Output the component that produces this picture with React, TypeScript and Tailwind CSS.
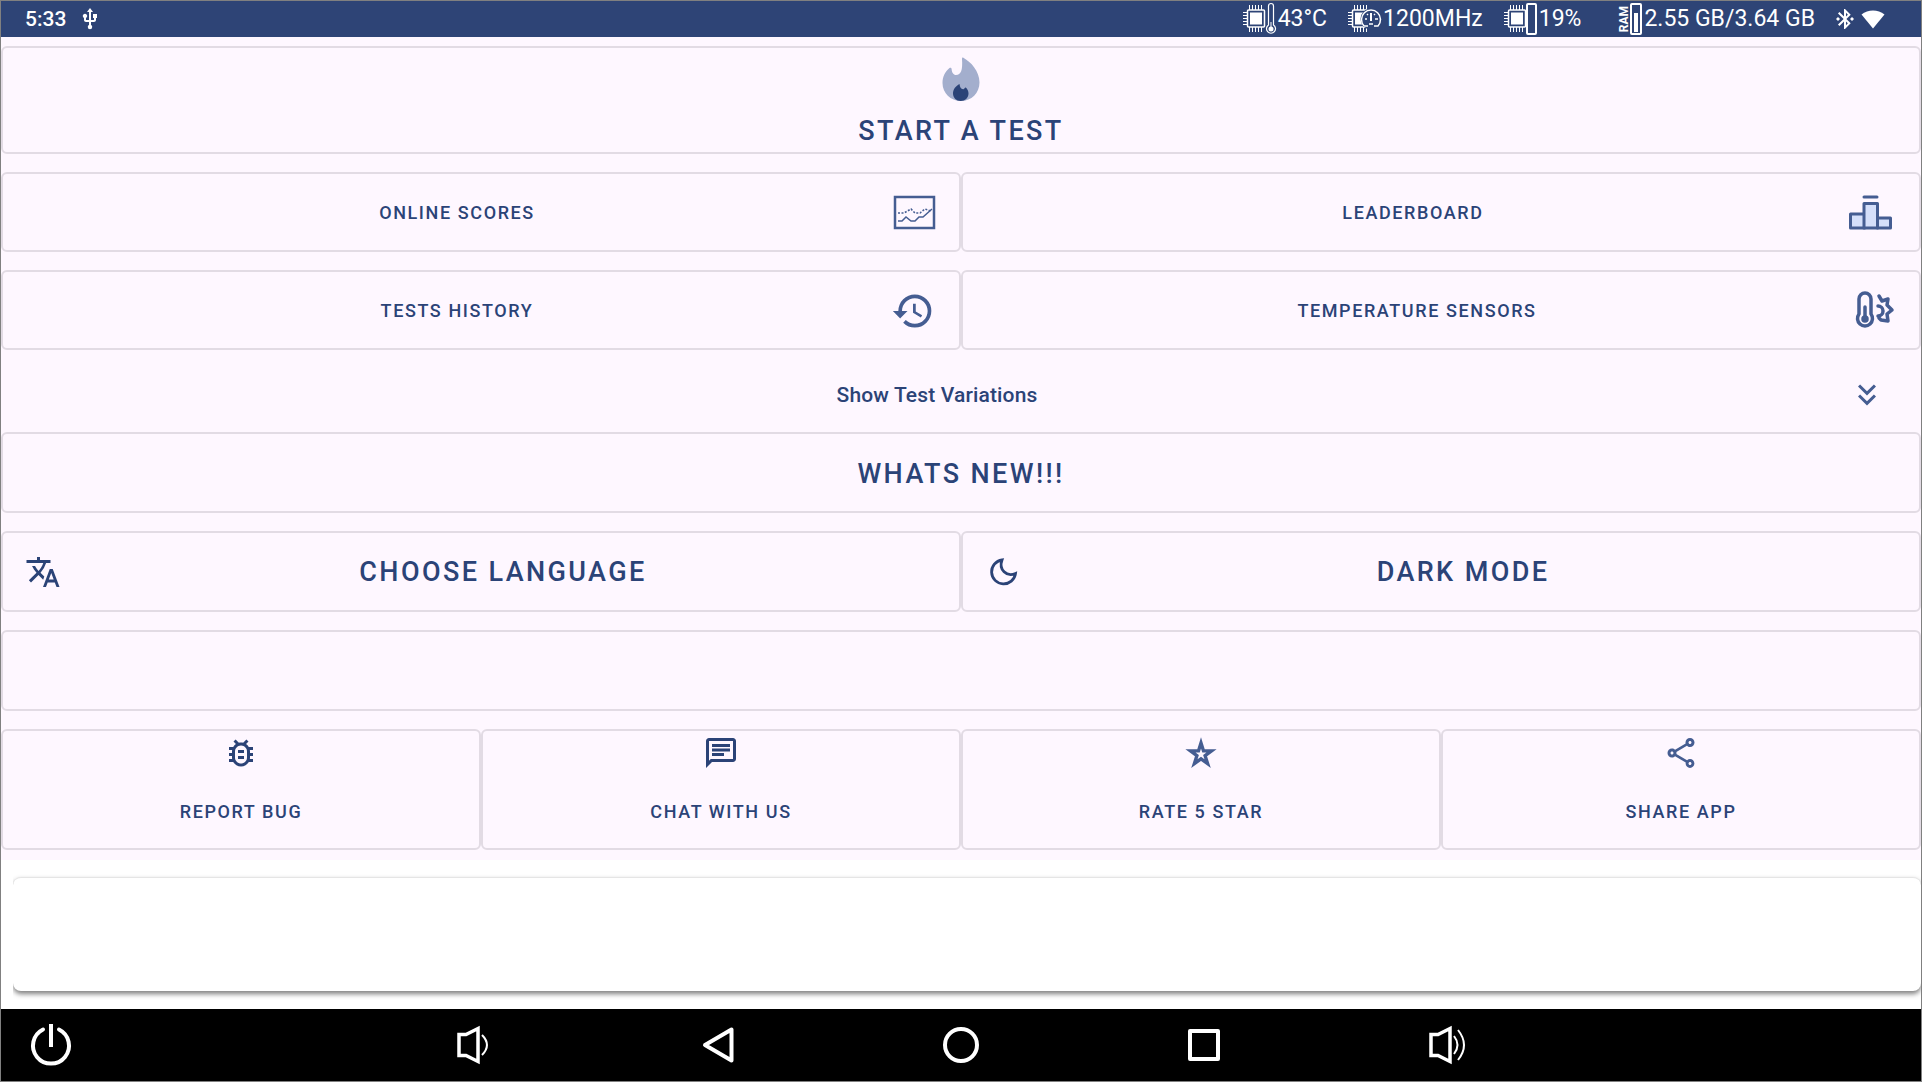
import React from "react";
import {
  MdBluetoothConnected,
  MdHistory,
  MdKeyboardDoubleArrowDown,
  MdOutlineBugReport,
  MdOutlineChat,
  MdOutlineShare,
  MdTranslate,
  MdUsb,
} from "react-icons/md";

const FlameIcon = () => (
  <svg width="38" height="44" viewBox="0 0 38 44" aria-hidden="true">
    <path
      d="M21 0.5C29 5 37.5 14 37.5 25.5C37.5 36 29.500 44 19 44C8.500 44 0.500 36 0.500 26C0.500 20 3 14.500 7.500 11C8.500 10.300 9.500 11 9.600 12C9.800 15.500 11.500 18 14 18C19 18 20.800 13 20 2C20 0.800 20.300 0.200 21 0.500Z"
      fill="#a3aecd"
    />
    <path
      d="M17.500 27C14 29 11 32 11 36.500C11 41 14.500 44 18.700 44C23 44 26.500 41 26.500 36.500C26.500 34 25.500 32 23.800 30.500C23 30 22.600 31.800 21.500 32.200C19 32.500 18 30.500 17.500 27Z"
      fill="#2b4377"
    />
  </svg>
);

const ScoresIcon = () => (
  <svg width="48" height="48" viewBox="0 0 48 48" fill="none" stroke="#455d92" aria-hidden="true">
    <rect x="6" y="8" width="39" height="31" strokeWidth="2.500" />
    <path d="M9 32h4l4-4 5 4h4l4-4h4l9-8" strokeWidth="1.500" />
    <path d="M9 24h6l7-4 4 4h5l5-4 6 2" strokeWidth="1.500" strokeDasharray="2 1.500" />
  </svg>
);

const PodiumIcon = () => (
  <svg
    width="56"
    height="48"
    viewBox="0 0 56 48"
    fill="#d5dffa"
    stroke="#455d92"
    strokeWidth="3"
    strokeLinejoin="round"
    strokeLinecap="round"
    aria-hidden="true"
  >
    <path d="M23 8h13" />
    <path d="M9.500 25h14v14h-14z" />
    <path d="M36.500 29h13v10h-13z" />
    <path d="M23 14.500h13.500v24.500H23z" />
  </svg>
);

const ThermometerIcon = () => (
  <svg
    width="48"
    height="48"
    viewBox="0 0 48 48"
    fill="none"
    stroke="#455d92"
    strokeWidth="3.500"
    strokeLinejoin="round"
    strokeLinecap="round"
    aria-hidden="true"
  >
    <path d="M10 12a6 6 0 0 1 12 0v15a7.500 7.500 0 1 1-12 0z" />
    <path d="M16 20v12" />
    <circle cx="16" cy="32" r="2" fill="#455d92" />
    <path d="M29 19a5 5 0 0 1 0 10" />
    <path d="M30 9l3 5 6-2-1 6 5 5-5 4 1 7-7-1-2-2" />
  </svg>
);

const MoonIcon = () => (
  <svg width="36" height="36" viewBox="0 0 36 36" aria-hidden="true">
    <path
      d="M17 6a12 12 0 1 0 13.500 13.500c-9 4-17-4-13.500-13.500z"
      fill="none"
      stroke="#2b4377"
      strokeWidth="2.800"
    />
  </svg>
);

const StarIcon = () => (
  <svg width="36" height="36" viewBox="0 0 36 36" aria-hidden="true">
    <path
      d="M18 8l2.500 7.900h8l-6.400 4.800 2.500 7.900-6.600-4.800-6.600 4.800 2.500-7.900-6.400-4.800h8z"
      fill="none"
      stroke="#455d92"
      strokeWidth="3.400"
    />
  </svg>
);

const Chip = () => (
  <g fill="none" stroke="#fff">
    <rect x="4.500" y="8" width="17" height="17" rx="1" strokeWidth="1.500" />
    <rect x="7" y="10.500" width="12" height="12" fill="#fff" stroke="none" />
    <path d="M6.500 3v5M9.500 3v5M12.500 3v5M15.500 3v5M18.500 3v5M6.500 25v5M9.500 25v5M12.500 25v5M15.500 25v5M18.500 25v5" />
    <path d="M0 10.500h4M0 13.500h4M0 16.500h4M0 19.500h4M0 22.500h4" />
  </g>
);

const CpuTempIcon = () => (
  <svg width="34" height="34" viewBox="0 0 34 34" aria-hidden="true">
    <Chip />
    <path
      d="M25.500 4a2.500 2.500 0 0 1 5 0v19a4.500 4.500 0 1 1-5 0z"
      fill="#2e4476"
      stroke="#fff"
      strokeWidth="1.200"
    />
    <circle cx="28" cy="27" r="2.500" fill="#fff" />
    <path d="M28 20v7" stroke="#fff" />
  </svg>
);

const CpuClockIcon = () => (
  <svg width="34" height="34" viewBox="0 0 34 34" aria-hidden="true">
    <Chip />
    <circle cx="23" cy="17" r="10.500" fill="#2e4476" />
    <g fill="none" stroke="#fff" strokeWidth="1.500">
      <path d="M16 24a9.500 9.500 0 1 1 14 0h-4M16 24h4" />
      <path d="M23 11v8" strokeWidth="2" />
      <path d="M17 17h2M27 17h3M19 12l1 1M27 12l-1 1M21 22h4" />
    </g>
  </svg>
);

const CpuLoadIcon = () => (
  <svg width="34" height="34" viewBox="0 0 34 34" aria-hidden="true">
    <Chip />
    <rect x="23" y="2" width="9" height="30" rx="1" fill="#2e4476" stroke="#fff" strokeWidth="2" />
  </svg>
);

const RamIcon = () => (
  <span className="flex items-center">
    <span className="rotate-180 text-[12px] leading-3 font-bold [writing-mode:vertical-rl]">
      RAM
    </span>
    <svg width="13" height="34" viewBox="0 0 13 34" aria-hidden="true">
      <rect x="1" y="2" width="10" height="30" rx="1" fill="none" stroke="#fff" strokeWidth="2" />
      <rect x="4" y="11" width="4" height="19" fill="#fff" />
    </svg>
  </span>
);

const WifiIcon = () => (
  <svg width="24" height="20" viewBox="0 0 24 20" aria-hidden="true">
    <path d="M12 19.500L0.500 5.500C7 0 17 0 23.500 5.500z" fill="#fff" />
  </svg>
);

const SpeakerIcon = ({ loud }: { loud?: boolean }) => (
  <svg width="42" height="42" viewBox="0 0 42 42" fill="none" stroke="#fff" aria-hidden="true">
    <path d="M5 10.500h7l12-6v33l-12-6H5z" strokeWidth="3.500" />
    {loud ? (
      <path d="M28 12q7 9 0 18M32 6q12 15 0 30" strokeWidth="2" />
    ) : (
      <path d="M28 11q10 10 0 20" strokeWidth="2" />
    )}
  </svg>
);

const StatusBar = () => (
  <header className="flex h-9 items-center justify-between bg-[#2e4476] pr-9 pl-6 text-white">
    <div className="flex items-center gap-3">
      <span className="text-[21px] leading-6 font-medium">5:33</span>
      <MdUsb size={24} />
    </div>
    <div className="flex items-center gap-[18px]">
      <div className="flex items-center gap-[21px] text-[23px] leading-8">
        <span className="flex items-center gap-px">
          <CpuTempIcon />
          43°C
        </span>
        <span className="flex items-center gap-px">
          <CpuClockIcon />
          1200MHz
        </span>
        <span className="mr-4 flex items-center gap-px">
          <CpuLoadIcon />
          19%
        </span>
        <span className="flex items-center gap-px">
          <RamIcon />
          2.55 GB/3.64 GB
        </span>
      </div>
      <div className="flex items-center gap-1">
        <MdBluetoothConnected size={24} />
        <WifiIcon />
      </div>
    </div>
  </header>
);

interface CardButtonProps {
  className: string;
  children?: React.ReactNode;
  label?: string;
}
const CardButton = (props: CardButtonProps) => {
  const { className, children, label } = props;

  return (
    <button
      aria-label={label}
      className={`flex w-full items-center rounded-md border-2 border-[#e2dbe4] font-medium text-[#2b4377] ${className}`}
    >
      {children}
    </button>
  );
};

const small = "text-lg tracking-[0.089em]";
const large = "text-[27px] leading-8 tracking-[0.089em]";

const NavBar = () => (
  <nav className="grid h-18 grid-cols-[352fr_repeat(5,243fr)_352fr] items-center bg-black">
    <button aria-label="Power" className="justify-self-start pl-7">
      <svg width="44" height="44" viewBox="0 0 44 44" fill="none" stroke="#fff" strokeLinecap="round" aria-hidden="true">
        <path d="M14 6.500a18 18 0 1 0 16 0" strokeWidth="4" />
        <path d="M22 1v23" strokeWidth="4" strokeLinecap="butt" />
      </svg>
    </button>
    <button aria-label="Volume down" className="justify-self-center">
      <SpeakerIcon />
    </button>
    <button aria-label="Back" className="justify-self-center">
      <svg width="36" height="40" viewBox="0 0 36 40" fill="none" stroke="#fff" aria-hidden="true">
        <path d="M31.500 4.500v31L5 20z" strokeWidth="4" strokeLinejoin="round" />
      </svg>
    </button>
    <button aria-label="Home" className="justify-self-center">
      <svg width="40" height="40" viewBox="0 0 40 40" fill="none" stroke="#fff" aria-hidden="true">
        <circle cx="20" cy="20" r="16" strokeWidth="4" />
      </svg>
    </button>
    <button aria-label="Recent apps" className="justify-self-center">
      <svg width="40" height="40" viewBox="0 0 40 40" fill="none" stroke="#fff" aria-hidden="true">
        <rect x="6" y="6" width="28" height="28" strokeWidth="4" strokeLinejoin="round" />
      </svg>
    </button>
    <button aria-label="Volume up" className="justify-self-center">
      <SpeakerIcon loud />
    </button>
  </nav>
);

const App = () => {
  return (
    <div className="flex min-h-screen flex-col border border-[#808080] bg-white font-[Roboto,sans-serif]">
      <StatusBar />
      <main className="flex flex-col gap-[18px] bg-[#fef7ff] pt-[9px] pb-[10px]">
        <CardButton className={`h-27 flex-col gap-3.5 pt-[9px] ${large}`}>
          <FlameIcon />
          START A TEST
        </CardButton>
        <div className="grid grid-cols-2">
          <CardButton className={`h-20 px-[22px] pt-0.5 ${small}`}>
            <span className="flex-1">ONLINE SCORES</span>
            <ScoresIcon />
          </CardButton>
          <CardButton className={`h-20 px-[22px] pt-0.5 ${small}`}>
            <span className="flex-1">LEADERBOARD</span>
            <PodiumIcon />
          </CardButton>
        </div>
        <div>
          <div className="grid grid-cols-2">
            <CardButton className={`h-20 px-[22px] pt-0.5 ${small}`}>
              <span className="flex-1">TESTS HISTORY</span>
              <span className="flex w-12 justify-center text-[#455d92]">
                <MdHistory size={44} />
              </span>
            </CardButton>
            <CardButton className={`h-20 px-[22px] pt-0.5 ${small}`}>
              <span className="flex-1">TEMPERATURE SENSORS</span>
              <ThermometerIcon />
            </CardButton>
          </div>
          <button className="flex h-[82px] w-full items-center pt-2 pr-9 pl-6 text-[21px] leading-8 font-medium tracking-[0.007em] text-[#2b4377]">
            <span className="flex-1">Show Test Variations</span>
            <MdKeyboardDoubleArrowDown size={36} color="#455d92" />
          </button>
          <CardButton className={`h-[81px] justify-center pt-0.5 ${large}`}>WHATS NEW!!!</CardButton>
        </div>
        <div className="grid grid-cols-2">
          <CardButton className={`h-[81px] gap-2 px-[22px] ${large}`}>
            <MdTranslate size={36} />
            <span className="flex-1">CHOOSE LANGUAGE</span>
          </CardButton>
          <CardButton className={`h-[81px] gap-2 px-[22px] ${large}`}>
            <MoonIcon />
            <span className="flex-1">DARK MODE</span>
          </CardButton>
        </div>
        <CardButton className="h-[81px]" label="Empty" />
        <div className="grid grid-cols-4">
          <CardButton className={`h-[121px] flex-col gap-[27px] pt-1 ${small}`}>
            <MdOutlineBugReport size={36} />
            REPORT BUG
          </CardButton>
          <CardButton className={`h-[121px] flex-col gap-[27px] pt-1 ${small}`}>
            <MdOutlineChat size={36} />
            CHAT WITH US
          </CardButton>
          <CardButton className={`h-[121px] flex-col gap-[27px] pt-1 ${small}`}>
            <StarIcon />
            RATE 5 STAR
          </CardButton>
          <CardButton className={`h-[121px] flex-col gap-[27px] pt-1 ${small}`}>
            <MdOutlineShare size={36} color="#455d92" />
            SHARE APP
          </CardButton>
        </div>
      </main>
      <div className="ml-3 flex flex-1 flex-col overflow-hidden pt-[17px] pb-[18px]">
        <div className="min-h-28 flex-1 rounded-lg border-t border-[#e5e5e5] bg-white shadow-[0_3px_5px_rgba(0,0,0,0.5)]" />
      </div>
      <NavBar />
    </div>
  );
};

export default App;
